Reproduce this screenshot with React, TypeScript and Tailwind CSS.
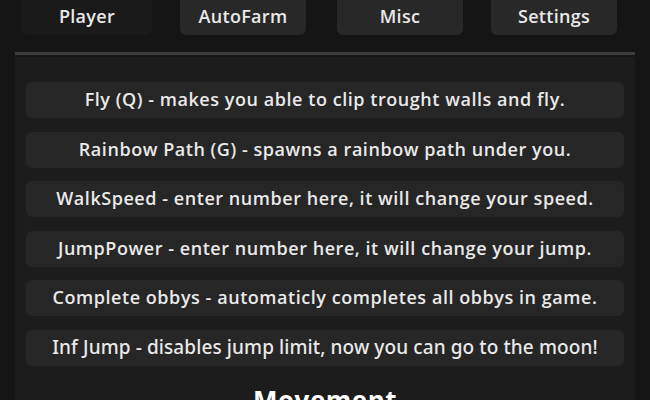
import React from "react";

const tabs = [
  { name: "Player", cls: "w-[130px] ml-[22px] bg-[#1a1a1a]" },
  { name: "AutoFarm", cls: "w-[126px] ml-[28px] bg-[#282828]" },
  { name: "Misc", cls: "w-[126px] ml-[31px] bg-[#282828]" },
  { name: "Settings", cls: "w-[126px] ml-[28px] bg-[#282828]" },
];

const rows = [
  "Fly (Q) - makes you able to clip trought walls and fly.",
  "Rainbow Path (G) - spawns a rainbow path under you.",
  "WalkSpeed - enter number here, it will change your speed.",
  "JumpPower - enter number here, it will change your jump.",
  "Complete obbys - automaticly completes all obbys in game.",
];

export default function App() {
  return (
    <div
      className="w-[650px] h-[400px] overflow-hidden bg-[#151515] text-[#e9e9e9]"
      style={{ fontFamily: "'Open Sans', 'Noto Sans', sans-serif" }}
    >
      {/* tab bar */}
      <div className="flex h-[35px]">
        {tabs.map((t) => (
          <div
            key={t.name}
            className={`${t.cls} h-full rounded-b-md flex items-center justify-center pb-[3px] text-[18px] font-semibold tracking-[0.3px]`}
          >
            {t.name}
          </div>
        ))}
      </div>

      <div className="mx-[15px] mt-[17px] h-[3px] w-[620px] bg-[#3b3b3b]" />

      {/* content */}
      <div className="mx-[15px] mt-[2px] w-[620px] h-[400px] bg-[#1c1c1c] pt-[25px] px-[11px]">
        <div className="flex flex-col gap-[13.6px]">
          {rows.map((r) => (
            <div
              key={r}
              className="h-[36px] rounded-md bg-[#262626] flex items-center justify-center text-[18px] font-semibold tracking-[0.55px] pb-[1px] whitespace-nowrap"
            >
              {r}
            </div>
          ))}
          <div
            className="h-[36px] rounded-md bg-[#262626] flex items-center justify-center text-[19px] font-medium tracking-[0.1px] pb-[1px] whitespace-nowrap"
            style={{ fontFamily: "'Noto Sans', sans-serif" }}
          >
            Inf Jump - disables jump limit, now you can go to the moon!
          </div>
        </div>
        <div className="mt-[21px] text-center text-[26px] font-bold leading-none tracking-[0.5px] text-white">
          Movement
        </div>
      </div>
    </div>
  );
}
